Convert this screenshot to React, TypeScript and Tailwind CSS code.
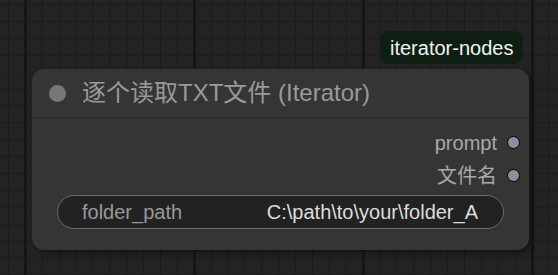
import React from "react";

const font = "font-['Liberation_Sans','Noto_Sans_CJK_SC',Arial,sans-serif]";

function Slot({ label }: { label: string }) {
  return (
    <div className="flex h-[33px] items-center justify-end gap-[10px] pr-[9px]">
      <span className="text-[20px] leading-none text-[#a8a8a8]">{label}</span>
      <span className="h-[13px] w-[13px] rounded-full border border-black bg-[#8e8e9e]" />
    </div>
  );
}

export default function App() {
  return (
    <div
      className={`relative h-[275px] w-[558px] overflow-hidden bg-[#232323] ${font} bg-[linear-gradient(to_right,#161616_3px,transparent_3px),linear-gradient(to_right,#1b1b1b_1px,transparent_1px),linear-gradient(to_bottom,#1b1b1b_1px,transparent_1px)] [background-size:169px_100%,16.9px_16.9px,16.9px_16.9px] [background-position:24px_0,8px_0,0_4px]`}
    >
      <div className="absolute left-[380px] top-[31px] flex h-[33px] items-center rounded-[9px] bg-[#0f1e12] px-[10px]">
        <span className="text-[20px] leading-none text-[#f2f2f2]">iterator-nodes</span>
      </div>

      <div className="absolute left-[32px] top-[69px] flex h-[181px] w-[497px] flex-col rounded-[12px] bg-[#353535] shadow-[3px_3px_6px_rgba(0,0,0,0.45)]">
        <div className="flex h-[49px] items-center border-b border-[#2c2c2c] pl-[17px]">
          <span className="h-[17px] w-[17px] rounded-full bg-[#777777]" />
          <span className="ml-[16px] text-[24px] leading-none text-[#9a9a9a]">逐个读取TXT文件 (Iterator)</span>
        </div>
        <div className="flex flex-col pt-[8px]">
          <Slot label="prompt" />
          <Slot label="文件名" />
        </div>
        <div className="mx-[25px] mt-[3px] flex h-[34px] items-center justify-between rounded-full border border-[#6a6a6a] bg-[#222222] pl-[24px] pr-[25px]">
          <span className="text-[20px] leading-none text-[#999999]">folder_path</span>
          <span className="text-[20px] leading-none text-[#dddddd]">C:\path\to\your\folder_A</span>
        </div>
      </div>
    </div>
  );
}
